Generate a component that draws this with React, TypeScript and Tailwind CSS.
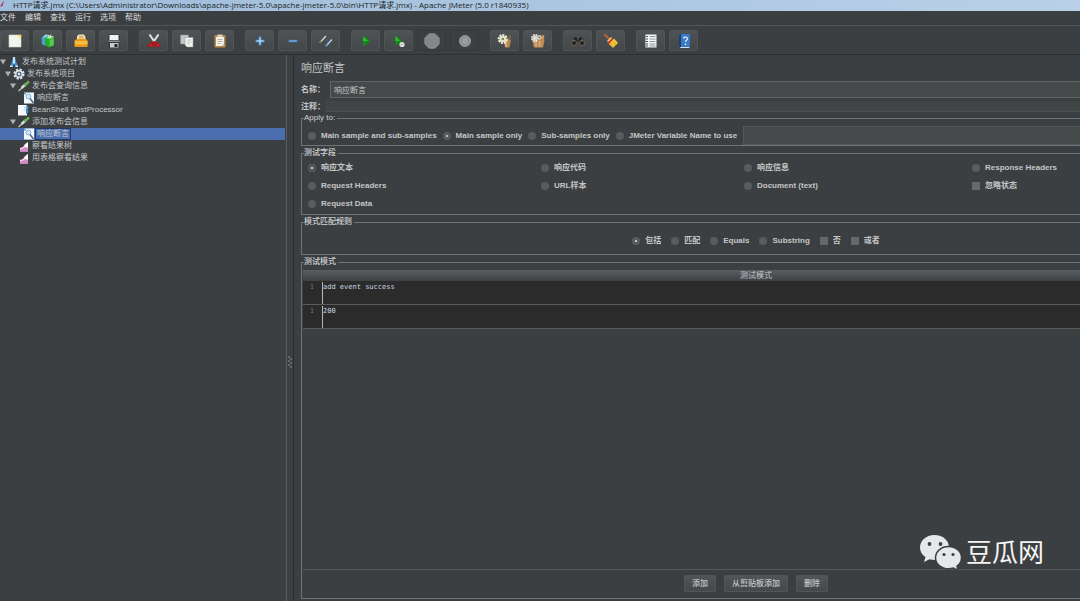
import React, { useState } from 'react';

const svg = 'block h-4 w-4 shrink-0';

const NewIcon = () => (
  <svg className={svg} viewBox="0 0 16 16">
    <rect x="2" y="2" width="12" height="12" fill="#f4f4ee" stroke="#d3d3cc" strokeWidth=".6" />
    <path d="M10 2h4v5z" fill="#f3e9a0" />
    <circle cx="12.6" cy="3.2" r="1.5" fill="#f7e46a" />
  </svg>
);

const TemplatesIcon = () => (
  <svg className={svg} viewBox="0 0 16 16">
    <path d="M1.5 5 5 2l4 .5v9l-4 1.300L2 11z" fill="#3fa7c9" />
    <path d="M2 5 6 3.500l3-1.500-3.500-.6z" fill="#9fdcf0" />
    <path d="M5 5.500 9 3l5 .5v9L9 14.500l-4-2.500z" fill="#2fa334" />
    <path d="m6 5 4-2.500 4 1-4 2.500z" fill="#a6e89b" />
    <path d="M9.5 7 13.500 5v7L9.5 13.500z" fill="#52cf45" />
    <path d="M8 2l1.5 2L11 1.5" stroke="#e8f4e8" strokeWidth="1" fill="none" />
  </svg>
);

const OpenIcon = () => (
  <svg className={svg} viewBox="0 0 16 16">
    <path d="M4 8V3L6 1.500h5L12.500 4v4z" fill="#f3dfb0" />
    <path d="M6 3.5h4M6 5h5" stroke="#b48b3c" strokeWidth=".7" />
    <path d="M1.500 7.5 4 6h9l1.5 1.5V14h-13z" fill="#e39a1c" />
    <path d="M2 8h12.5v3.5H2z" fill="#f6bb41" />
  </svg>
);

const SaveIcon = () => (
  <svg className={svg} viewBox="0 0 16 16">
    <path d="M2.500 1.500h11v13h-11z" fill="#34383c" />
    <path d="M3.500 2h9v5h-9z" fill="#f0f1f2" />
    <path d="M2.500 7.500h11V9h-11z" fill="#8d9195" />
    <path d="M4 10h8.500v4.500H4z" fill="#c9cdd0" />
    <path d="M8.500 11h3v3h-3z" fill="#25282b" />
  </svg>
);

const CutIcon = () => (
  <svg className={svg} viewBox="0 0 16 16">
    <path d="M3.5 1.500 9 9.500M12.5 1.500 7 9.500" stroke="#e4e4e4" strokeWidth="2" />
    <path d="M7.500 8 9 9.500 6.5 14H2v-2.500zM8.500 8l5.500 3.500V14h-4.500L7 9.500z" fill="#b3151b" />
    <path d="M4 12h2M10.5 12h2" stroke="#d9464c" strokeWidth=".8" />
  </svg>
);

const CopyIcon = () => (
  <svg className={svg} viewBox="0 0 16 16">
    <path d="M1.5 2h8v9h-8z" fill="#c6c8c8" stroke="#8b8e8f" strokeWidth=".6" />
    <path d="M6 4.5h8V14H8L6 12z" fill="#f5f5f2" stroke="#9a9c9c" strokeWidth=".6" />
    <path d="M8 7h4.5M8 9h4.5M8 11h3" stroke="#babdbd" strokeWidth=".8" />
  </svg>
);

const PasteIcon = () => (
  <svg className={svg} viewBox="0 0 16 16">
    <rect x="2.5" y="2" width="11" height="12.500" rx="1" fill="#b98a4a" />
    <path d="M4 4h8v9H4z" fill="#f1efe6" />
    <rect x="5.5" y="1.5" width="5" height="2.5" fill="#d8d2bd" />
    <path d="M5.5 6.5h5M5.5 8.5h5M5.5 10.5h3" stroke="#a7a49a" strokeWidth=".8" />
    <path d="m9 13 3-3v3z" fill="#cfcabb" />
  </svg>
);

const PlusIcon = () => (
  <svg className={svg} viewBox="0 0 16 16">
    <path d="M8 3.5v9M3.5 8h9" stroke="#4e94d6" strokeWidth="2.6" />
    <path d="M8 4.5v7M4.5 8h7" stroke="#c4e2fa" strokeWidth="1" />
  </svg>
);

const MinusIcon = () => (
  <svg className={svg} viewBox="0 0 16 16">
    <path d="M3.5 8h9" stroke="#4680bd" strokeWidth="2.4" />
    <path d="M4.5 8h7" stroke="#8fbbe4" strokeWidth=".9" />
  </svg>
);

const ToggleIcon = () => (
  <svg className={svg} viewBox="0 0 16 16">
    <path d="M2 9.500 8 3" stroke="#c9cfc2" strokeWidth="1.6" />
    <path d="m1.500 10 1.800-2" stroke="#6e7f4e" strokeWidth="1.4" />
    <path d="M8 13 14 6.500" stroke="#b9cbdc" strokeWidth="1.6" />
    <path d="m7.500 13.500 1.800-2" stroke="#4c8ac4" strokeWidth="1.6" />
    <path d="m7.500 7 3-1.500-1 3z" fill="#2a61a6" />
  </svg>
);

const StartIcon = () => (
  <svg className={svg} viewBox="0 0 16 16">
    <path d="M5 2 12 8l-7 6z" fill="#128a16" />
    <path d="M5 3.500 10 8H5z" fill="#2cc02f" />
  </svg>
);

const StartNoPauseIcon = () => (
  <svg className={svg} viewBox="0 0 16 16">
    <path d="M4.5 2 11 8l-6.5 5z" fill="#128a16" />
    <path d="M4.5 3 9 8H4.5z" fill="#2cc02f" />
    <circle cx="11" cy="11.5" r="2.6" fill="#e3e6e3" />
    <path d="M10 12.5 12 10.5" stroke="#6c706c" strokeWidth=".9" />
  </svg>
);

const StopIcon = () => (
  <svg className={svg} viewBox="0 0 16 16">
    <path d="M5 .8h6L15.2 5v6L11 15.2H5L.8 11V5z" fill="#868888" stroke="#9a9c9c" strokeWidth=".7" />
  </svg>
);

const ShutdownIcon = () => (
  <svg className={svg} viewBox="0 0 16 16">
    <circle cx="8" cy="8" r="5.6" fill="#8f9191" stroke="#a5a7a7" strokeWidth=".7" />
    <circle cx="8" cy="8" r="3" fill="#9b9d9d" />
  </svg>
);

const ClearIcon = () => (
  <svg className={svg} viewBox="0 0 16 16">
    <path d="M6.5 6.5H14L12.5 14.5H8z" fill="#b98550" />
    <path d="M8 7h1.5l.5 7H8.6z" fill="#e0b78a" />
    <path d="m11 6 1.5-4.5L14 3l-1 4z" fill="#8d6a3f" />
    <circle cx="5.8" cy="6" r="4" fill="none" stroke="#ecebd9" strokeWidth="2.2" strokeDasharray="2 1" />
    <circle cx="5.8" cy="6" r="3.2" fill="#e6e5cf" />
    <circle cx="5.8" cy="6" r="1.3" fill="#6f8b3d" />
  </svg>
);

const ClearAllIcon = () => (
  <svg className={svg} viewBox="0 0 16 16">
    <path d="M2 6.500H14.500L13 14.5H4z" fill="#c08d5a" />
    <path d="M5 8h1.5l.5 6H5.6zM9 8h1.5l-.3 6H9z" fill="#dcae7d" />
    <path d="m11.5 7 1-5.5L14.5 3l-1 4z" fill="#d69a4c" />
    <circle cx="5" cy="5" r="3" fill="none" stroke="#ecebe2" strokeWidth="2" strokeDasharray="1.6 .8" />
    <circle cx="5" cy="5" r="2.3" fill="#dedccf" />
    <circle cx="9.5" cy="4.5" r="2.4" fill="#cfcabb" />
    <circle cx="9.5" cy="4.5" r="1" fill="#8d8774" />
  </svg>
);

const SearchIcon = () => (
  <svg className={svg} viewBox="0 0 16 16">
    <path d="M3 5.5 5 4l2 1v6H1.5zM13 5.5 11 4 9 5v6h5.5z" fill="#1d1d1d" />
    <path d="M6.5 6.5h3v2.5h-3z" fill="#35312c" />
    <circle cx="4" cy="10" r="2.6" fill="#252321" stroke="#81786b" strokeWidth=".7" />
    <circle cx="12" cy="10" r="2.6" fill="#252321" stroke="#81786b" strokeWidth=".7" />
    <path d="M4 5.5v3M12 5.5v3" stroke="#8c7f6c" strokeWidth=".8" />
  </svg>
);

const BroomIcon = () => (
  <svg className={svg} viewBox="0 0 16 16">
    <path d="M1.500 1.500 7.500 7" stroke="#b8692f" strokeWidth="2" />
    <path d="m4.500 9.500 4.500-4.500 2 2-4.500 5z" fill="#c8372c" />
    <path d="m6 11 5-5.500 4 4.500-5 5z" fill="#f4c63a" />
    <path d="m8 10.500 3 3.500M10 8.500l3.500 3.500" stroke="#c8921e" strokeWidth=".7" />
    <path d="m4.500 8.500 4-4" stroke="#f6dc7a" strokeWidth="1.200" />
  </svg>
);

const ListIcon = () => (
  <svg className={svg} viewBox="0 0 16 16">
    <path d="M2.5 1.5h11v13h-11z" fill="#f6f8f8" />
    <path d="M3 3.5h2M3 6h2M3 8.500h2M3 11h2M3 13h2" stroke="#34556b" strokeWidth="1.2" />
    <path d="M6.500 3.500h6M6.500 6h6M6.500 8.500h6M6.500 11h6M6.500 13h6" stroke="#7c8a90" strokeWidth=".9" />
  </svg>
);

const HelpIcon = () => (
  <svg className={svg} viewBox="0 0 16 16">
    <path d="M3 2 5 1h9v13l-1.500 1H3z" fill="#3b78c4" />
    <path d="M3 2l2-1v13l-2 1z" fill="#1d3c68" />
    <path d="M5 14h9l-1.500 1H3.500z" fill="#d9e3ee" />
    <path d="M7.500 5.500C7.500 3.500 11.500 3.500 11.500 5.700c0 1.500-2 1.600-2 3.300M9.500 10.500v1.500" stroke="#d5e8fb" strokeWidth="1.300" fill="none" />
  </svg>
);

const treeSvg = 'block h-3 w-3 shrink-0';

const PlanIcon = () => (
  <svg className={treeSvg} viewBox="0 0 12 12">
    <path d="M5 1h2l1 4 2 6H7.500L6 7.500 4.500 11H2l2-6z" fill="#4a94d6" />
    <path d="M5.200 1h1.600v6L6 8l-.8-1z" fill="#e9f3fc" />
    <path d="M2 9.500h2.500V11H2zM7.500 9.500H10V11H7.500z" fill="#cfe3f5" />
  </svg>
);

const GearIcon = () => (
  <svg className={treeSvg} viewBox="0 0 12 12">
    <circle cx="6" cy="6" r="4.700" fill="none" stroke="#e4e8ee" strokeWidth="1.800" strokeDasharray="2.200 1.500" />
    <circle cx="6" cy="6" r="3.300" fill="#56657d" stroke="#e4e8ee" strokeWidth="1.400" />
    <circle cx="6" cy="6" r="1.300" fill="#dfe5ee" />
  </svg>
);

const SamplerIcon = () => (
  <svg className={treeSvg} viewBox="0 0 12 12">
    <path d="M.5 11 5 7" stroke="#c5c7c4" strokeWidth="1.300" />
    <path d="M3.500 8 8 4" stroke="#d5dbd2" strokeWidth="2.400" />
    <path d="M6.500 5.500 11 1.500" stroke="#67b14b" strokeWidth="2.400" />
  </svg>
);

const AssertionIcon = () => (
  <svg className={treeSvg} viewBox="0 0 12 12">
    <path d="M1 .5h10v11H1z" fill="#f4f8fb" />
    <circle cx="5.500" cy="4.500" r="2.400" fill="#d3e9f7" stroke="#7fb0d4" strokeWidth="1" />
    <path d="M7 6.500 10.500 11" stroke="#49657f" strokeWidth="1.400" />
    <path d="M1 .5h2v2H1z" fill="#5d9fd2" />
  </svg>
);

const PostProcessorIcon = () => (
  <svg className={treeSvg} viewBox="0 0 12 12">
    <path d="M0 1h9v10.500H0z" fill="#f6f7f8" />
    <path d="M8 1.500c3 0 3 3 1.500 4.500 1.500 1 1 3.500-1.500 4z" fill="#3d8dd0" />
    <path d="M6 3.500h3M5.500 6h3" stroke="#9dc8ea" strokeWidth="1.200" />
  </svg>
);

const ListenerIcon = () => (
  <svg className={treeSvg} viewBox="0 0 12 12">
    <path d="M2 11.500V8l3-1 2-3 3-2v9.500z" fill="#f3dcf1" />
    <path d="M2 11.500V9.500l3-1 2-1.500 3 1v3.500z" fill="#d68aca" />
    <path d="M6 6.500 10 2v5z" fill="#fff" />
  </svg>
);

const toolbar = [
  [
    { label: '新建', Icon: NewIcon },
    { label: '模板', Icon: TemplatesIcon },
    { label: '打开', Icon: OpenIcon },
    { label: '保存', Icon: SaveIcon },
  ],
  [
    { label: '剪切', Icon: CutIcon },
    { label: '复制', Icon: CopyIcon },
    { label: '粘贴', Icon: PasteIcon },
  ],
  [
    { label: '展开', Icon: PlusIcon },
    { label: '收起', Icon: MinusIcon },
    { label: '切换', Icon: ToggleIcon },
  ],
  [
    { label: '启动', Icon: StartIcon },
    { label: '不停顿启动', Icon: StartNoPauseIcon },
    { label: '停止', Icon: StopIcon, disabled: true },
    { label: '关闭', Icon: ShutdownIcon, disabled: true },
  ],
  [
    { label: '清除', Icon: ClearIcon },
    { label: '清除全部', Icon: ClearAllIcon },
  ],
  [
    { label: '查找', Icon: SearchIcon },
    { label: '重置查找', Icon: BroomIcon },
  ],
  [
    { label: '函数助手', Icon: ListIcon },
    { label: '帮助', Icon: HelpIcon },
  ],
];

const tree = [
  { id: 1, label: '发布系统测试计划', Icon: PlanIcon, indent: 'pl-0', open: true },
  { id: 2, label: '发布系统项目', Icon: GearIcon, indent: 'pl-[5px]', open: true },
  { id: 3, label: '发布会查询信息', Icon: SamplerIcon, indent: 'pl-[10px]', open: true },
  { id: 4, label: '响应断言', Icon: AssertionIcon, indent: 'pl-[15px]' },
  { id: 5, label: 'BeanShell PostProcessor', Icon: PostProcessorIcon, indent: 'pl-[10px]' },
  { id: 6, label: '添加发布会信息', Icon: SamplerIcon, indent: 'pl-[10px]', open: true },
  { id: 7, label: '响应断言', Icon: AssertionIcon, indent: 'pl-[15px]' },
  { id: 8, label: '察看结果树', Icon: ListenerIcon, indent: 'pl-[10px]' },
  { id: 9, label: '用表格察看结果', Icon: ListenerIcon, indent: 'pl-[10px]' },
];

interface OptionProps {
  type?: 'radio' | 'checkbox';
  name: string;
  label: string;
  checked?: boolean;
}

const Option: React.FC<OptionProps> = ({ type = 'radio', name, label, checked }) => (
  <label className="flex items-center gap-[5px] whitespace-nowrap font-bold">
    <input
      type={type}
      name={name}
      defaultChecked={checked}
      className={
        type === 'radio'
          ? 'h-2 w-2 shrink-0 appearance-none rounded-full border-[3px] border-[#585c5e] bg-[#585c5e] checked:bg-[#e0e0e0]'
          : 'h-2 w-2 shrink-0 appearance-none bg-[#65696b] checked:bg-[#c0c0c0]'
      }
    />
    {label}
  </label>
);

interface GroupProps {
  title: string;
  className: string;
  children: React.ReactNode;
}

const Group: React.FC<GroupProps> = ({ title, className, children }) => (
  <fieldset className={`min-w-0 border border-[#6f7375] px-px ${className}`}>
    <legend className="ml-px pr-[2px] leading-[10px] font-medium text-[#d0d2d3]">{title}</legend>
    {children}
  </fieldset>
);

const Tree = () => {
  const [selected, setSelected] = useState(7);

  return (
    <nav className="w-[287px] shrink-0 border-r border-[#5a5e60] pt-px">
      <ul>
        {tree.map(({ id, label, Icon, indent, open }) => (
          <li key={id} className={id === selected ? 'mr-px bg-[#4b6eaf]' : 'mr-px'}>
            <button onClick={() => setSelected(id)} className={`flex h-3 w-full items-center ${indent}`}>
              <span className="w-2 shrink-0">
                {open && (
                  <svg className="block h-[6px] w-[6px]" viewBox="0 0 6 6">
                    <path d="M0 .5h6L3 5.500z" fill="#adafb0" />
                  </svg>
                )}
              </span>
              <Icon />
              <span
                className={`border px-px leading-[10px] ${
                  id === selected ? 'border-[#1f3768]' : 'border-transparent'
                }`}
              >
                {label}
              </span>
            </button>
          </li>
        ))}
      </ul>
    </nav>
  );
};

const patterns = ['add event success', '200'];

const smallButton =
  'h-[17px] rounded-[1px] border border-[#525658] bg-linear-to-b from-[#515557] to-[#45494b] px-[7px] font-medium leading-[15px]';

const AssertionPanel = () => (
  <main className="flex min-w-0 flex-1 overflow-hidden pl-[7px]">
    <div className="flex min-w-[910px] flex-1 flex-col pb-[2px]">
      <h1 className="pt-[5px] pb-[4px] text-[11px] leading-[17px]">响应断言</h1>
      <div className="flex h-[17px] items-center">
        <label htmlFor="name" className="w-[29px] shrink-0 font-bold">名称：</label>
        <input
          id="name"
          defaultValue="响应断言"
          className="h-[17px] min-w-0 flex-1 border border-[#5f6365] bg-[#45494a] px-[3px] outline-none"
        />
      </div>
      <div className="mt-[2px] flex h-[13px] items-center">
        <label htmlFor="comment" className="w-[25px] shrink-0 font-bold">注释：</label>
        <input
          id="comment"
          className="h-[11px] min-w-0 flex-1 border-b border-[#4c5052] bg-[#414546] px-[3px] outline-none"
        />
      </div>

      <Group title="Apply to:" className="pt-[3px]">
        <div className="flex h-[19px] items-center gap-[6px] pl-[5px]">
          <Option name="scope" label="Main sample and sub-samples" />
          <Option name="scope" label="Main sample only" checked />
          <Option name="scope" label="Sub-samples only" />
          <Option name="scope" label="JMeter Variable Name to use" />
          <input
            aria-label="JMeter Variable Name"
            className="h-[19px] min-w-0 flex-1 border border-[#55595b] bg-[#45494a] px-[3px] outline-none"
          />
        </div>
      </Group>

      <Group title="测试字段" className="mt-[2px] py-px">
        <div className="grid auto-rows-[18px] grid-cols-[233px_203px_228px_auto] items-center pl-[5px]">
          <Option name="field" label="响应文本" checked />
          <Option name="field" label="响应代码" />
          <Option name="field" label="响应信息" />
          <Option name="field" label="Response Headers" />
          <Option name="field" label="Request Headers" />
          <Option name="field" label="URL样本" />
          <Option name="field" label="Document (text)" />
          <Option type="checkbox" name="ignore" label="忽略状态" />
          <Option name="field" label="Request Data" />
        </div>
      </Group>

      <Group title="模式匹配规则" className="mt-[2px] pt-[5px] pb-[4px]">
        <div className="flex h-[18px] items-center justify-center gap-[10px]">
          <Option name="rule" label="包括" checked />
          <Option name="rule" label="匹配" />
          <Option name="rule" label="Equals" />
          <Option name="rule" label="Substring" />
          <Option type="checkbox" name="not" label="否" />
          <Option type="checkbox" name="or" label="或者" />
        </div>
      </Group>

      <Group title="测试模式" className="mt-[2px] flex flex-1 flex-col pt-[3px]">
        <div className="flex h-full flex-col">
          <table className="w-full border-collapse">
            <thead>
              <tr>
                <th colSpan={2} className="h-[11px] bg-linear-to-b from-[#5a5e60] to-[#3e4143] p-0 leading-[11px] font-normal">
                  测试模式
                </th>
              </tr>
            </thead>
            <tbody className="bg-[#2b2b2b] font-['DejaVu_Sans_Mono','Noto_Sans_CJK_SC',monospace] text-[7px]">
              {patterns.map((pattern, i) => (
                <tr key={i} className="border-b border-[#5a5b59]">
                  <td className="w-[19px] pt-[2px] pr-2 text-right align-top leading-[9px] text-[#707476]">1</td>
                  <td className="p-0 pt-px">
                    <textarea
                      aria-label={`测试模式 ${i + 1}`}
                      defaultValue={pattern}
                      className="block h-[22px] w-full resize-none overflow-hidden border-l border-[#b5b8ba] pt-px leading-[9px] text-[#c9d6e4] outline-none"
                    />
                  </td>
                </tr>
              ))}
            </tbody>
          </table>
          <div className="mt-auto flex justify-center gap-2 border-t border-[#54585a] pt-[5px] pb-[6px]">
            <button className={smallButton}>添加</button>
            <button className={smallButton}>从剪贴板添加</button>
            <button className={smallButton}>删除</button>
          </div>
        </div>
      </Group>
    </div>
  </main>
);

const Watermark = () => (
  <div className="pointer-events-none absolute right-[36px] bottom-[29px] flex items-center gap-1 text-[#f4f4f4]">
    <svg className="h-[38px] w-[43px]" viewBox="0 0 43 38">
      <path
        d="M15.500 1C7 1 1 6.600 1 13.500c0 4 2 7.300 5.500 9.600L5 28l5.500-2.700c1.800.5 3.500.7 5.500.7C24 26 30 20.500 30 13.500S24 1 15.500 1z"
        fill="#e6e7e8"
      />
      <path
        d="M29.500 12.500c7.300 0 13 5 13 11.200 0 3.500-1.700 6.400-4.500 8.500l1.300 4.300-4.800-2.400c-1.600.4-3.200.7-5 .7-7.300 0-13-5-13-11.100s5.700-11.200 13-11.200z"
        fill="#e6e7e8"
        stroke="#3c3f41"
        strokeWidth="1.500"
      />
      <circle cx="10.500" cy="10" r="1.900" fill="#3c3f41" />
      <circle cx="21.500" cy="10" r="1.900" fill="#3c3f41" />
      <circle cx="25" cy="20.500" r="1.600" fill="#3c3f41" />
      <circle cx="34" cy="20.500" r="1.600" fill="#3c3f41" />
    </svg>
    <span className="text-[26px] leading-[38px]">豆瓜网</span>
  </div>
);

const App: React.FC = () => (
  <div className="relative flex h-screen flex-col overflow-hidden bg-[#3c3f41] font-['Liberation_Sans','Noto_Sans_CJK_SC',sans-serif] text-[8px] leading-3 text-[#c4c6c7]">
    <header className="flex h-[11px] shrink-0 bg-linear-to-r from-[#9fbcd8] to-[#b9d0e8] font-['Open_Sans','Noto_Sans_CJK_SC',sans-serif] leading-[9px] whitespace-nowrap text-[#1b1f24]">
      <svg className="mr-[5px] block h-2 w-2" viewBox="0 0 8 8">
        <path d="M0 6.500C1 5 2.500 3 4 0L2.500 6z" fill="#c3234f" />
      </svg>
      <h2>
        HTTP请求.jmx (C:\Users\Administrator\Downloads\apache-jmeter-5.0\apache-jmeter-5.0\bin\HTTP请求.jmx) - Apache JMeter (5.0 r1840935)
      </h2>
    </header>

    <div className="flex h-[15px] shrink-0 items-center gap-[9px] border-b border-[#505456]">
      {['文件', '编辑', '查找', '运行', '选项', '帮助'].map((item) => (
        <button key={item} className="text-[#dcdddd]">{item}</button>
      ))}
    </div>

    <div className="flex h-[29px] shrink-0 items-center gap-[11px] border-b border-[#2c2e30] pt-px">
      {toolbar.map((group, i) => (
        <div key={i} className="flex gap-1">
          {group.map(({ label, Icon, disabled }: { label: string; Icon: React.FC; disabled?: boolean }) => (
            <button
              key={label}
              aria-label={label}
              disabled={disabled}
              className="flex h-[21px] w-[29px] items-center justify-center rounded-[2px] border border-[#505456] bg-linear-to-b from-[#4f5355] to-[#434749] disabled:border-[#35383a] disabled:bg-none"
            >
              <Icon />
            </button>
          ))}
        </div>
      ))}
    </div>

    <div className="flex min-h-0 flex-1">
      <Tree />
      <div className="flex w-[7px] shrink-0 items-center justify-center border-r border-[#2a2c2e] pt-17">
        <svg className="h-3 w-1" viewBox="0 0 4 12">
          <path d="M0 1h2M2 3h2M0 5h2M2 7h2M0 9h2M2 11h2" stroke="#8b8f91" strokeWidth="1" />
        </svg>
      </div>
      <AssertionPanel />
    </div>

    <Watermark />
  </div>
);

export default App;
